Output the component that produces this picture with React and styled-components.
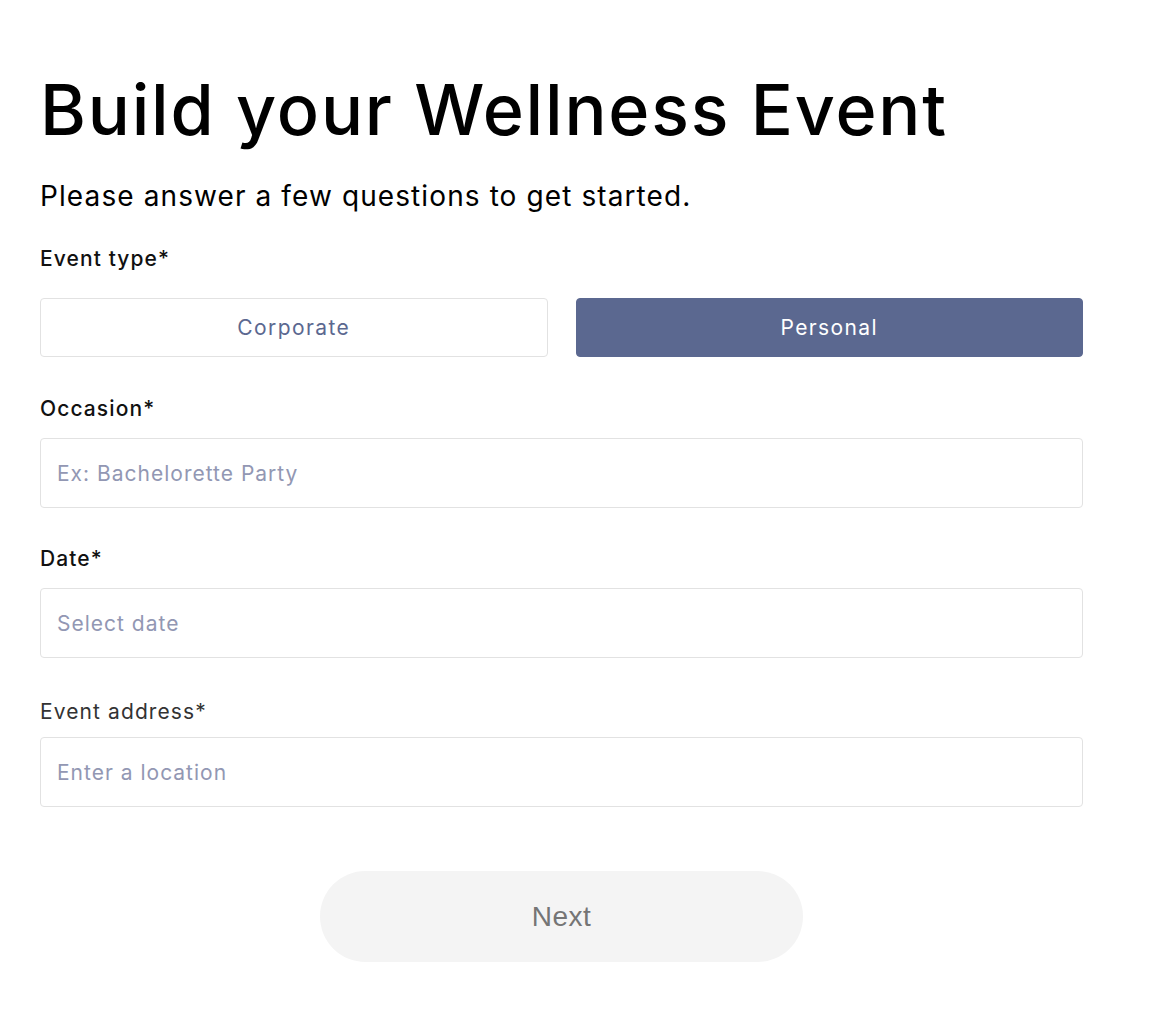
import React from "react";
import styled, { createGlobalStyle } from "styled-components";

const GlobalStyle = createGlobalStyle`
  html, body { margin: 0; padding: 0; background: #ffffff; }
  body { font-family: Inter, "Open Sans", sans-serif; color: #000; }
  * { box-sizing: border-box; }
`;

const Page = styled.main`
  padding: 70px 0 60px 40px;
  width: 1083px;
`;

const Title = styled.h1`
  margin: 0;
  font-size: 70px;
  font-weight: 500;
  line-height: 80px;
  letter-spacing: 1.8px;
  color: #000;
`;

const Subtitle = styled.p`
  margin: 29px 0 0;
  font-size: 28px;
  font-weight: 400;
  line-height: 34px;
  letter-spacing: 1.1px;
  color: #000;
`;

const Field = styled.section`
  display: flex;
  flex-direction: column;
  margin-top: ${(p) => p.$top}px;
`;

const Label = styled.label`
  font-size: 21px;
  line-height: 24px;
  letter-spacing: 1.1px;
  font-weight: ${(p) => (p.$light ? 400 : 500)};
  color: ${(p) => (p.$light ? "#333" : "#111")};
  margin-bottom: ${(p) => p.$gap}px;
`;

const ToggleRow = styled.div`
  display: grid;
  grid-template-columns: 1fr 1fr;
  gap: 28px;
`;

const Toggle = styled.button`
  height: 59px;
  border-radius: 4px;
  border: 1px solid ${(p) => (p.$active ? "#5b6890" : "#e2e2e2")};
  background: ${(p) => (p.$active ? "#5b6890" : "#ffffff")};
  color: ${(p) => (p.$active ? "#ffffff" : "#5b6890")};
  font-family: inherit;
  font-size: 21px;
  letter-spacing: 1.4px;
  font-weight: 400;
  cursor: pointer;
`;

const Input = styled.input`
  height: 70px;
  width: 100%;
  border: 1px solid #e2e2e2;
  border-radius: 4px;
  padding: 0 16px;
  font-family: inherit;
  font-size: 21px;
  letter-spacing: 1px;
  color: #333;
  outline: none;
  &::placeholder { color: #9297b3; }
`;

const Actions = styled.div`
  display: flex;
  justify-content: center;
  margin-top: 64px;
`;

const NextButton = styled.button`
  width: 483px;
  height: 91px;
  border: none;
  border-radius: 46px;
  background: #f4f4f4;
  color: #757575;
  font-family: "Liberation Sans", Arial, sans-serif;
  font-size: 28px;
  letter-spacing: 0.5px;
  cursor: pointer;
`;

export default function App() {
  return (
    <>
      <GlobalStyle />
      <Page>
        <Title>Build your Wellness Event</Title>
        <Subtitle>Please answer a few questions to get started.</Subtitle>

        <Field $top={34}>
          <Label $gap={27}>Event type*</Label>
          <ToggleRow>
            <Toggle>Corporate</Toggle>
            <Toggle $active>Personal</Toggle>
          </ToggleRow>
        </Field>

        <Field $top={40}>
          <Label $gap={17}>Occasion*</Label>
          <Input placeholder="Ex: Bachelorette Party" />
        </Field>

        <Field $top={39}>
          <Label $gap={17}>Date*</Label>
          <Input placeholder="Select date" />
        </Field>

        <Field $top={42}>
          <Label $light $gap={13}>Event address*</Label>
          <Input placeholder="Enter a location" />
        </Field>

        <Actions>
          <NextButton>Next</NextButton>
        </Actions>
      </Page>
    </>
  );
}
